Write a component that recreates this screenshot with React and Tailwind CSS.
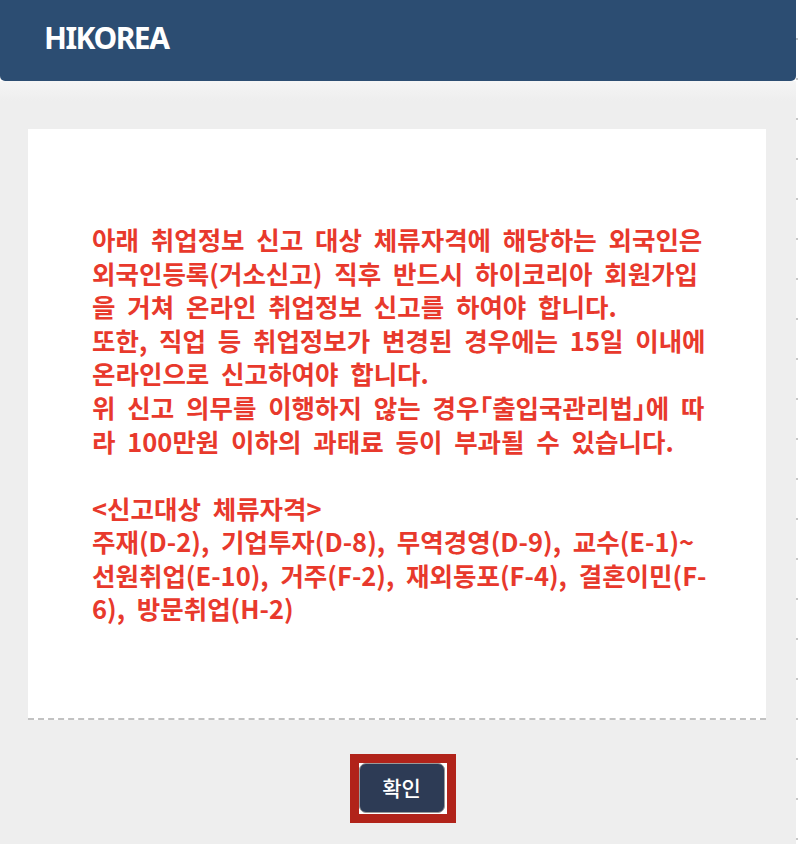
export default function App() {
  return (
    <div className="flex w-[798px] h-[844px] bg-white overflow-hidden">
      <div className="flex flex-col w-[796px] h-full">
        <div className="h-[81px] shrink-0 bg-[#2c4d72] rounded-b-[5px] flex items-center px-[44px] pb-[6px]">
          <h1 className="font-['Noto_Sans',sans-serif] font-bold text-[30px] tracking-[-1.5px] text-white leading-none">HIKOREA</h1>
        </div>
        <div className="flex-1 flex flex-col pt-[48px] pl-[28px] pr-[30px] bg-[linear-gradient(to_bottom,#f5f5f5_0px,#eeeeee_20px)]">
          <div className="h-[591px] bg-white border-b-2 border-dashed border-[#c2c2c2] flex flex-col justify-center pl-[64px]">
            <div className="w-[624px] font-['Noto_Sans_CJK_KR',sans-serif] font-bold text-[25.5px] leading-[33.6px] [word-spacing:6px] [font-feature-settings:'halt'] text-[#e8392c]">
              <p>
                아래 취업정보 신고 대상 체류자격에 해당하는 외국인은 외국인등록(거소신고) 직후 반드시 하이코리아 회원가입을 거쳐 온라인 취업정보 신고를 하여야 합니다.
              </p>
              <p>또한, 직업 등 취업정보가 변경된 경우에는 15일 이내에 온라인으로 신고하여야 합니다.</p>
              <p>위 신고 의무를 이행하지 않는 경우「출입국관리법」에 따라 100만원 이하의 과태료 등이 부과될 수 있습니다.</p>
              <p>&nbsp;</p>
              <p>&lt;신고대상 체류자격&gt;</p>
              <p>주재(D-2), 기업투자(D-8), 무역경영(D-9), 교수(E-1)~선원취업(E-10), 거주(F-2), 재외동포(F-4), 결혼이민(F-6), 방문취업(H-2)</p>
            </div>
          </div>
          <div className="flex justify-center pt-[34px] pl-[11px]">
            <div className="border-[9px] border-[#b1231a] bg-white pr-[2px] pb-[1px]">
              <button className="w-[86px] h-[50px] rounded-[7px] bg-[#2d3b55] border border-[#9a9a9a] text-white text-[21px] font-['Noto_Sans_CJK_KR',sans-serif] font-medium">
                확인
              </button>
            </div>
          </div>
        </div>
      </div>
      <div className="w-[2px] h-full bg-[repeating-linear-gradient(to_bottom,transparent_0px,transparent_38px,#c8c8c8_38px,#c8c8c8_40px)]"></div>
    </div>
  );
}
